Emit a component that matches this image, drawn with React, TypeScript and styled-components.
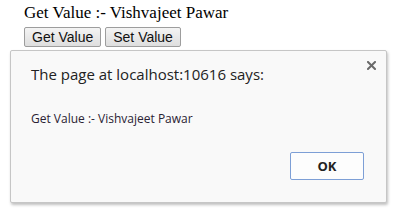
import React from "react";
import styled, { createGlobalStyle } from "styled-components";

const Global = createGlobalStyle`
  html, body { margin: 0; padding: 0; background: #ffffff; }
  body { width: 400px; height: 215px; overflow: hidden; position: relative; }
`;

const Page = styled.div`
  padding: 3px 0 0 24px;
  font-family: "Liberation Serif", "Times New Roman", serif;
  font-size: 17px;
  color: #000;
`;

const ValueLine = styled.div`
  line-height: 19px;
  height: 24px;
`;

const ButtonRow = styled.div`
  display: flex;
  gap: 4px;
`;

const PageButton = styled.button`
  height: 20px;
  padding: 0 7px;
  border: 1px solid #9d9d9d;
  border-radius: 2px;
  background: linear-gradient(#f4f4f4, #dedede);
  font-family: "Liberation Sans", Arial, sans-serif;
  font-size: 14px;
  color: #111;
  line-height: 18px;
`;

const Dialog = styled.div`
  position: absolute;
  left: 10px;
  top: 50px;
  width: 377px;
  height: 153px;
  box-sizing: border-box;
  background: #f9f9f9;
  border: 1px solid #c6c6c6;
  border-radius: 2px;
  box-shadow: 1px 2px 3px rgba(0, 0, 0, 0.25);
  padding: 12px 22px 0 20px;
  display: flex;
  flex-direction: column;
  font-family: "Open Sans", "Noto Sans", sans-serif;
`;

const TitleRow = styled.div`
  display: flex;
  justify-content: space-between;
  align-items: flex-start;
`;

const Title = styled.div`
  font-size: 15px;
  line-height: 22px;
  color: #222;
`;

const Close = styled.svg`
  flex: none;
  width: 9px;
  height: 9px;
  margin: -2px -12px 0 0;
`;

const Message = styled.div`
  margin-top: 26px;
  font-size: 12px;
  line-height: 16px;
  color: #2a2233;
`;

const Footer = styled.div`
  display: flex;
  justify-content: flex-end;
  margin-top: 25px;
`;

const OkButton = styled.button`
  width: 74px;
  height: 28px;
  border: 1px solid #7d9fd6;
  border-radius: 2px;
  background: #fdfdfd;
  font-family: "Open Sans", "Noto Sans", sans-serif;
  font-size: 13px;
  font-weight: bold;
  color: #222;
`;

export default function App() {
  return (
    <>
      <Global />
      <Page>
        <ValueLine>Get Value :- Vishvajeet Pawar</ValueLine>
        <ButtonRow>
          <PageButton>Get Value</PageButton>
          <PageButton>Set Value</PageButton>
        </ButtonRow>
      </Page>
      <Dialog>
        <TitleRow>
          <Title>The page at localhost:10616 says:</Title>
          <Close viewBox="0 0 9 9">
            <path d="M1 1 L8 8 M8 1 L1 8" stroke="#6a6a6a" strokeWidth="2" strokeLinecap="square" />
          </Close>
        </TitleRow>
        <Message>Get Value :- Vishvajeet Pawar</Message>
        <Footer>
          <OkButton>OK</OkButton>
        </Footer>
      </Dialog>
    </>
  );
}
